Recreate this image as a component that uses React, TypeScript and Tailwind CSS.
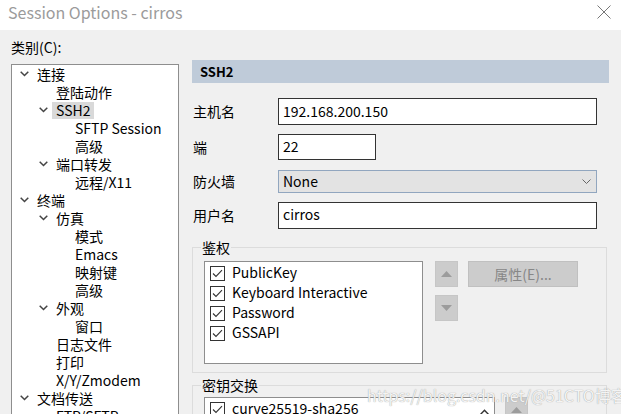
import React from "react";

const Chevron = () => (
  <svg width="9" height="6" viewBox="0 0 9 6" className="block">
    <polyline points="0.7,0.7 4.5,4.5 8.3,0.7" fill="none" stroke="#444" strokeWidth="1.5" />
  </svg>
);

type Node = { t: string; l: number; c?: boolean; sel?: boolean };

const tree: Node[] = [
  { t: "连接", l: 0, c: true },
  { t: "登陆动作", l: 1 },
  { t: "SSH2", l: 1, c: true, sel: true },
  { t: "SFTP Session", l: 2 },
  { t: "高级", l: 2 },
  { t: "端口转发", l: 1, c: true },
  { t: "远程/X11", l: 2 },
  { t: "终端", l: 0, c: true },
  { t: "仿真", l: 1, c: true },
  { t: "模式", l: 2 },
  { t: "Emacs", l: 2 },
  { t: "映射键", l: 2 },
  { t: "高级", l: 2 },
  { t: "外观", l: 1, c: true },
  { t: "窗口", l: 2 },
  { t: "日志文件", l: 1 },
  { t: "打印", l: 1 },
  { t: "X/Y/Zmodem", l: 1 },
  { t: "文档传送", l: 0, c: true },
  { t: "FTP/SFTP", l: 1 },
];

const indent = ["pl-[8px]", "pl-[27px]", "pl-[46px]"];

const CheckBox = () => (
  <svg width="15" height="15" viewBox="0 0 15 15" className="block shrink-0">
    <rect x="0.5" y="0.5" width="14" height="14" fill="#fff" stroke="#333" />
    <polyline points="3,7.5 6,10.5 12,4.2" fill="none" stroke="#333" strokeWidth="1.1" />
  </svg>
);

const TriBtn = ({ up }: { up: boolean }) => (
  <div className="w-[23px] h-[26px] shrink-0 bg-[#cccccc] border border-[#c6c6c6] flex items-center justify-center">
    <svg width="11" height="6" viewBox="0 0 11 6">
      {up ? <polygon points="0,6 5.5,0 11,6" fill="#9c9c9c" /> : <polygon points="0,0 5.5,6 11,0" fill="#9c9c9c" />}
    </svg>
  </div>
);

export default function App() {
  return (
    <div className="w-[621px] h-[414px] overflow-hidden flex flex-col relative text-black [font-family:'Noto_Sans_CJK_SC','Noto_Sans',sans-serif] text-[14px]">
      {/* Title bar */}
      <div className="h-[30px] bg-white flex items-center justify-between pl-[8px] pr-[10px] shrink-0">
        <span className="text-[16px] text-[#9b9b9b] leading-none -mt-[6px]">Session Options - cirros</span>
        <svg width="14" height="14" viewBox="0 0 14 14" className="-mt-[6px]">
          <line x1="0.5" y1="0.5" x2="13.5" y2="13.5" stroke="#777" strokeWidth="1" />
          <line x1="13.5" y1="0.5" x2="0.5" y2="13.5" stroke="#777" strokeWidth="1" />
        </svg>
      </div>

      {/* Body */}
      <div className="flex-1 bg-[#f0f0f0] flex overflow-hidden">
        {/* Left */}
        <div className="w-[192px] shrink-0 pl-[11px] pt-[8px] flex flex-col">
          <div className="h-[18px] leading-[18px] shrink-0">类别(C):</div>
          <div className="mt-[8px] w-[168px] h-[400px] shrink-0 bg-white border border-[#8e8e8e]">
            {tree.map((n, i) => (
              <div key={i} className={`h-[18px] flex items-center ${indent[n.l]}`}>
                <div className="w-[13px] shrink-0 flex items-center">{n.c ? <Chevron /> : null}</div>
                <span className={`px-[4px] leading-[17px] whitespace-nowrap ${n.sel ? "bg-[#d9d9d9]" : ""}`}>{n.t}</span>
              </div>
            ))}
          </div>
        </div>

        {/* Right */}
        <div className="w-[417px] shrink-0 pt-[30px] flex flex-col">
          <div className="h-[23px] shrink-0 bg-[#bfcbd9] flex items-center pl-[8px] text-[13px] font-bold">SSH2</div>

          <div className="mt-[15px] shrink-0 flex items-center">
            <div className="w-[86px] pl-[1px]">主机名</div>
            <div className="w-[319px] h-[27px] bg-white border border-[#333] flex items-center pl-[4px] pb-[1px]">192.168.200.150</div>
          </div>
          <div className="mt-[9px] shrink-0 flex items-center">
            <div className="w-[86px] pl-[1px]">端</div>
            <div className="w-[98px] h-[26px] bg-white border border-[#333] flex items-center pl-[4px] pb-[2px]">22</div>
          </div>
          <div className="mt-[10px] shrink-0 flex items-center">
            <div className="w-[86px] pl-[1px]">防火墙</div>
            <div className="w-[319px] h-[23px] bg-[#e3e3e3] border border-[#91a6bf] flex items-center justify-between pl-[4px] pr-[5px]">
              <span>None</span>
              <svg width="9" height="6" viewBox="0 0 9 6">
                <polyline points="0.5,0.5 4.5,4.5 8.5,0.5" fill="none" stroke="#666" strokeWidth="1" />
              </svg>
            </div>
          </div>
          <div className="mt-[9px] shrink-0 flex items-center">
            <div className="w-[86px] pl-[1px]">用户名</div>
            <div className="w-[319px] h-[27px] bg-white border border-[#333] flex items-center pl-[4px] pb-[2px]">cirros</div>
          </div>

          {/* 鉴权 group */}
          <div className="mt-[18px] w-[415px] h-[126px] border border-[#dcdcdc] relative shrink-0">
            <span className="absolute -top-[10px] left-[8px] px-[1px] bg-[#f0f0f0] leading-[18px]">鉴权</span>
            <div className="pl-[11px] pt-[13px] flex">
              <div className="w-[219px] h-[103px] bg-white border border-[#8e8e8e] pt-[4px] pl-[5px] flex flex-col">
                {["PublicKey", "Keyboard Interactive", "Password", "GSSAPI"].map((t) => (
                  <div key={t} className="h-[20px] flex items-start">
                    <CheckBox />
                    <span className="ml-[7px] leading-[15px] -mt-[1px]">{t}</span>
                  </div>
                ))}
              </div>
              <div className="ml-[12px] flex flex-col gap-[8px]">
                <TriBtn up />
                <TriBtn up={false} />
              </div>
              <div className="ml-[10px] w-[110px] h-[26px] bg-[#cccccc] border border-[#c0c0c0] flex items-center justify-center text-[#878787]">
                属性(E)...
              </div>
            </div>
          </div>

          {/* 密钥交换 group */}
          <div className="mt-[12px] w-[415px] h-[80px] border border-[#dcdcdc] relative shrink-0">
            <span className="absolute -top-[10px] left-[8px] px-[1px] bg-[#f0f0f0] leading-[18px]">密钥交换</span>
            <div className="pl-[11px] pt-[11px] flex">
              <div className="w-[291px] h-[60px] bg-white border border-[#8e8e8e] flex">
                <div className="flex-1 pt-[4px] pl-[5px] flex items-start">
                  <CheckBox />
                  <span className="ml-[7px] leading-[15px] -mt-[1px]">curve25519-sha256</span>
                </div>
                <div className="w-[20px] flex justify-center pt-[11px]">
                  <svg width="11" height="7" viewBox="0 0 11 7">
                    <polyline points="0.8,6.2 5.5,1.2 10.2,6.2" fill="none" stroke="#333" strokeWidth="1.4" />
                  </svg>
                </div>
              </div>
              <div className="ml-[10px]">
                <TriBtn up />
              </div>
            </div>
          </div>
        </div>
      </div>

      {/* watermark */}
      <div className="absolute left-[367px] top-[385px] text-[16px] leading-[20px] text-[#f4f4f4] [text-shadow:0_0_1px_#8a8a8a] whitespace-nowrap pointer-events-none">
        https://blog.csdn.net/@51CTO博客
      </div>
    </div>
  );
}
